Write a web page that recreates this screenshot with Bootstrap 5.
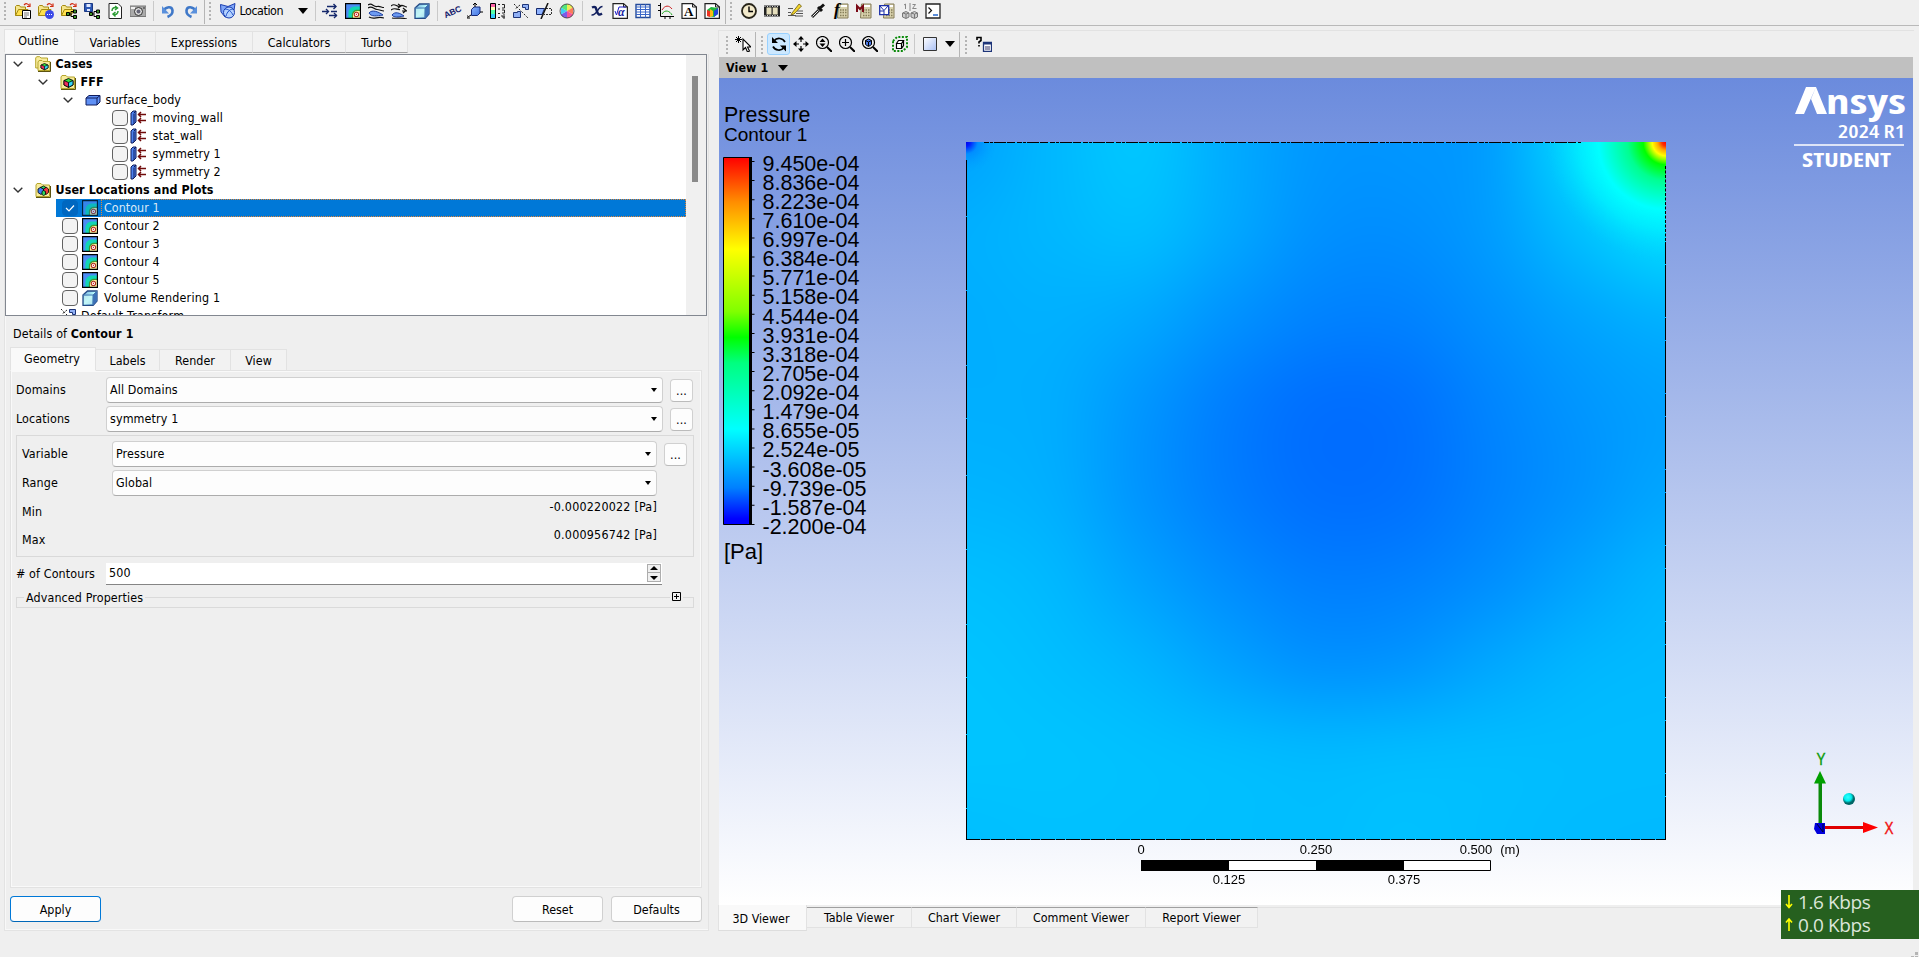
<!DOCTYPE html>
<html lang="en">
<head>
<meta charset="utf-8">
<title>CFD-Post</title>
<link rel="stylesheet" href="https://cdn.jsdelivr.net/npm/bootstrap@5.3.0/dist/css/bootstrap.min.css">
<style>
body{width:1919px;height:957px;overflow:hidden;background:#efefef;color:#000;font:12.4px/18px "DejaVu Sans Condensed","DejaVu Sans",sans-serif;font-stretch:condensed;white-space:nowrap}
b{font-weight:700;letter-spacing:.1px}
.topbar{height:26px;border-bottom:1px solid #b9b9b9;padding-bottom:3px}
.topbar .grip{height:22px}
.ic{width:23px;flex:none;display:flex;align-items:center;justify-content:center}
.ic svg,.ti{width:16px;height:16px;flex:none;overflow:visible}
.grip{width:11.5px;flex:none;background:radial-gradient(circle,#b4b4b4 1.1px,transparent 1.4px) 3px 1px/4px 4px repeat-y}
.vsep{width:7px;flex:none;height:20px;background:linear-gradient(#c9c9c9,#c9c9c9) 3px 0/1px 100% no-repeat}
.edge{width:1.5px;flex:none;height:25px;border-left:1px solid #b5b5b5;margin-left:1px}
.loc{width:95px;font-size:12.4px;letter-spacing:-.45px}
.down{width:0;height:0;border:5px solid transparent;border-top:6px solid #000;border-bottom:0;flex:none}
.down.s{border-width:4px 3.5px 0}
.leftpane{width:705px;height:878px;margin:0 0 0 4px;flex:none;padding-top:3px}
.tabrow{height:24px;align-items:flex-end}
.tabrow>div{height:22px;background:#f2f2f2;border:1px solid #e2e2e2;border-left-width:0;text-align:center;flex:none;line-height:21px;font-size:12.4px}
.tabrow>div.on{height:24px;background:#f9f9f9;border-bottom-color:#f9f9f9;border-left-width:1px;padding-right:2px}
.outl>div:not(.on){border-bottom-color:#a0a0a0}
.outer{border:1px solid #e3e3e3;border-top:0;height:877px;box-shadow:inset 1px -1px #f8f8f8}
.tree{width:702px;height:262px;border:1px solid #828790;background:#fff;overflow:hidden;margin-top:1px;letter-spacing:.1px}
.tree .rw{height:18px;display:flex;align-items:center}
.tree .rw>svg{flex:none}
.chev{width:10px;height:6px}
.fi{margin:0 5px 0 11.5px}
.cb{width:16px;height:16px;border:1px solid #626262;border-radius:4px;background:#f3f3f3;flex:none}
.cb.ck{background:#0067c0;border-color:#0067c0}
.i3{padding-left:106px}
.i3 .ti{margin:0 6.5px 0 2px}
.sel{background:linear-gradient(#0078d7,#0078d7) 50px 0 no-repeat;color:#dbe9f6}
.sel .lab{outline:1px dotted #e0863a;outline-offset:-1px;height:18px;line-height:18px;flex:1;padding-left:3px}
.i2{padding-left:56px;letter-spacing:.05px}
.i2 .ti{margin:0 6px 0 4px}
.sbar{width:20px;background:#f0f0f0;padding:21px 0 0 6px;flex:none}
.sbar div{width:6px;height:106px;background:#8a8a8a}
.details{padding:0 6px 0 5px;letter-spacing:.12px}
.details .tabrow{letter-spacing:.05px}
.pane{border:1px solid #e2e2e2;width:692px;height:518px;box-shadow:inset 1px -1px #f9f9f9,inset -1px 1px #f9f9f9;padding:6px 6px 0 5px;margin-top:-1px}
.frow{display:flex;align-items:center;height:26px;margin-bottom:3px}
.frow>.fl{width:90px;flex:none}
.combo{height:26px;background:#fdfdfd;border:1px solid #d0d0d0;border-bottom-color:#acacac;border-radius:4px;display:flex;align-items:center;justify-content:space-between;padding:0 5px 0 3px;flex:none}
.dots{width:23px;height:23px;background:#fdfdfd;border:1px solid #d0d0d0;border-bottom-color:#bbb;border-radius:4px;margin-left:7px;text-align:center;line-height:22px;flex:none}
.grp{border:1px solid #d9d9d9;height:122px;width:678px;padding:5px 0 0 5px}
.pb{background:#fdfdfd;border:1px solid #d0d0d0;border-bottom-color:#bbb;border-radius:4px;width:91px;height:26px;text-align:center;line-height:25px;padding:0;font-size:12.4px;color:#000}
.pb.def{border-color:#0078d7;border-bottom-color:#0067b8}
.vals{width:635px;padding-top:4px}
.vals span+span{margin-top:-5px;letter-spacing:.22px}
.spin{width:556px;height:22px;background:#fff;border-bottom:1px solid #858585;display:flex;justify-content:space-between;padding:1px 1px 1px 3px}
.spin .ar{width:14px;height:18px;border:1px solid #adadad;background:#f0f0f0}
.adv{width:678px;height:11px;border:1px solid #dadada;position:relative}
.adv span,.adv svg{position:absolute;background:#efefef}
.viewbar{height:27px;border:1px solid #e2e2e2;border-width:1px 0 0 1px}
.viewbar .grip{height:20px}
.ic.hot{background:#cce8ff;border:1px solid #99d1ff;border-radius:3px;height:22px;margin:0 -1px}
.vname{height:21px;background:#c0c0c0;padding:0 0 0 7px;font-weight:700;letter-spacing:.1px}
.right{width:1196px;margin:4px 0 0 9px;flex:none}
.stage{position:relative;width:1194px;height:827px;margin-left:1px;background:linear-gradient(#6b8bdd,#fff);font-family:"Liberation Sans",Arial,sans-serif}
.stage>*{position:absolute}
.stage svg{overflow:visible}
.legend{left:5px;top:24px}
.legend .t1{font-size:21.4px;line-height:26px;letter-spacing:.1px}
.legend .t2{font-size:19px;line-height:14px;height:26.5px}
.legend ul{font-size:21.5px;line-height:19.12px;margin:0 0 0 38.5px;padding:0;list-style:none}
.legend .t3{font-size:22px;line-height:30px}
.cbar{left:4px;top:79px;width:31px;height:369px}
.plot{left:247px;top:64px;width:700px;height:698px}
.scale{left:390px;top:762px;width:420px;height:50px}
.brand{left:1070px;top:4px;width:124px;height:90px}
.triad{left:1090px;top:670px;width:100px;height:100px}
.vt{margin-left:0;align-items:flex-start}
.vt>div{height:21px;background:#f2f2f2;border:1px solid #e2e2e2;border-left-width:0;text-align:center;margin-top:2px;line-height:20px;border-top-color:#a0a0a0}
.vt>div.on{height:26px;margin-top:0;background:#f9f9f9;border-top:0;border-left-width:1px;line-height:28px;border-bottom-color:#ddd;padding-right:3px}
.vt>div.rest{flex:1;height:1px;background:#e2e2e2;border:0}
.net{position:absolute;left:1781px;top:890px;width:138px;height:49px;background:#26601f;color:#dce6da;font:19px/22.5px "Open Sans","Noto Sans",sans-serif;padding:1px 0 0 4px;letter-spacing:-.4px}
.net div{display:flex;align-items:center;gap:5px}
</style>
<script src="https://cdn.jsdelivr.net/npm/bootstrap@5.3.0/dist/js/bootstrap.bundle.min.js"></script>
</head>
<body>
<svg width="0" height="0" class="position-absolute">
<defs>
<linearGradient id="gb" x2="1" y2="1"><stop stop-color="#8ab4ff"/><stop offset="1" stop-color="#3e74e0"/></linearGradient>
<linearGradient id="gc" x2="1" y2="1"><stop stop-color="#fff"/><stop offset="1" stop-color="#a9c0f5"/></linearGradient>
<linearGradient id="gv" x2="1" y2="1"><stop stop-color="#6ba3d9"/><stop offset=".5" stop-color="#bff"/><stop offset="1" stop-color="#3b78c4"/></linearGradient>
<symbol id="fold" viewBox="0 0 16 16"><path d="M.5 12.500V3.500l1-1h3l1 1.500h5v2" fill="#f5e58b" stroke="#a58a10"/><path d="M.5 12.500 3.500 6.500H13l-3 6z" fill="#ffe14e" stroke="#a58a10"/><path d="M9 2c2-2 4-1.500 5 .5M15 .5v3h-3" fill="none" stroke="#d22a10" stroke-width="1.200"/></symbol>
<symbol id="net3" viewBox="0 0 16 16"><path d="M8 11h2M10 8.500v5M10 8.500h2M10 13.500h2" stroke="#000" fill="none"/><path d="M5.500 9.500h3v3h-3zM12.500 7h3v3h-3zM12.500 12.500h3v3h-3z" fill="#3c9a28" stroke="#000"/></symbol>
<symbol id="opn" viewBox="0 0 16 16"><use href="#fold"/><path d="M7.500 7.500h8v8h-8z" fill="#fff" stroke="#000"/><path d="M9 10h5M9 12h5M9 14h3" stroke="#777"/></symbol>
<symbol id="opc" viewBox="0 0 16 16"><use href="#fold"/><circle cx="11.500" cy="11.500" r="4.500" fill="#3a49e8"/><path d="M9 11.500h1M11 11.500h1M13 11.500h1" stroke="#fff"/></symbol>
<symbol id="ops" viewBox="0 0 16 16"><use href="#fold"/><use href="#net3"/></symbol>
<symbol id="sav" viewBox="0 0 16 16"><path d="M.5.5h8v8h-8z" fill="#2b57b5" stroke="#1c3a84"/><path d="M2.500 1h4v3h-4zM3 6h3v2H3z" fill="#dfe8ff"/><use href="#net3"/></symbol>
<symbol id="ref" viewBox="0 0 16 16"><path d="M2 .5h9L14.500 4v11.500H2z" fill="#fff" stroke="#222"/><path d="M5 8c0-3 2-4 5-3M8 3l2.500 2L8 7M11 8c0 3-2 4-5 3M8.500 9 6 11l2.500 2.500" fill="none" stroke="#2c9c34" stroke-width="1.500"/></symbol>
<symbol id="cam" viewBox="0 0 16 16"><path d="M0 3h16v10.500H0z" fill="#aaa" stroke="#777"/><path d="M1 4h4v2H1z" fill="#eee"/><circle cx="8.500" cy="8.500" r="4" fill="#ddd" stroke="#333"/><circle cx="8.500" cy="8.500" r="2" fill="#667"/><path d="M13 5h2" stroke="#333"/></symbol>
<symbol id="undo" viewBox="0 0 16 16"><path d="M3 8.500C6 3 12 3 12.500 7.500c.3 3-1.500 5-5 6.500" fill="none" stroke="#3f78c8" stroke-width="2.600"/><path d="M2 3v7.500h7z" fill="#5a90dc"/></symbol>
<symbol id="loc" viewBox="0 0 16 16"><path d="M.5 1.500 8 3.500l7-3-1 7L12 14H5L1 9z" fill="#7fa6f8" stroke="#1c3fb0"/><circle cx="9" cy="9.500" r="5.500" fill="#b5d2ff" stroke="#1c3fb0"/><path d="M5 6c3 0 6 2 8 6M13 6c-3 0-6 3-7 7" fill="none" stroke="#1c4fc8"/></symbol>
<symbol id="vec" viewBox="0 0 16 16"><path d="M0 8.500h6M5 3.500h9M9 8.500h6M7 12.500h8" stroke="#15286b" stroke-width="1.400"/><path d="m4 6 2.500 2.500L4 11M11.500 1 14 3.500 11.500 6M12 10l2.500 2.500L12 15" fill="none" stroke="#15286b" stroke-width="1.400"/></symbol>
<symbol id="cont" viewBox="0 0 14 14"><path d="M.5.500h13v13H.500z" fill="#4c8cf4"/><path d="M3 13.500V9c0-4 2.500-6 6-6h4.500v10.500z" fill="#12d6b4"/><path d="M6 13.500V10.500c0-2.500 2-4.500 4.500-4.500h3v7.500z" fill="#3f9a30"/><path d="M7 13.500V11c0-2.500 1.500-4 4-4h2.500v6.500z" fill="#fff3a0"/><circle cx="10" cy="10" r="1.900" fill="#fff" stroke="#b03020" stroke-width=".9"/><path d="M9.500 9.500h1v1h-1z" fill="#e22"/><path d="M.5.500h13v13H.500z" fill="none" stroke="#000"/></symbol>
<symbol id="strm" viewBox="0 0 16 16"><path d="M0 2c4-3 5 2 9 1.500s4 1 7 1M0 5c4-3 6 1.500 9 1.500s4 1.500 7 1.500M1 14c5 3 8-1 15 1" fill="none" stroke="#111" stroke-width="1.200"/><path d="M1 10c3-4 10-1 14 2-6 1-12 2-14-2z" fill="#6d9bf2" stroke="#1c3fa0"/></symbol>
<symbol id="strm2" viewBox="0 0 16 16"><path d="M0 3c4-4 6 2 9 0s4 1 7 1M0 7c4-3 6 0 9-.5M11 8h5M1 15c5 1 8-1 15 1M7 1l3 2-3 2M12 5l3 2.500L12 10" fill="none" stroke="#111" stroke-width="1.200"/><path d="M1 12c3-4 8-2 12 1-6 1-10 2-12-1z" fill="#6d9bf2" stroke="#1c3fa0"/></symbol>
<symbol id="vol" viewBox="0 0 16 16"><path d="M1 5 5.500 1H15v10l-4 4.500H1z" fill="url(#gv)" stroke="#234a86" stroke-width="1.300"/><path d="M11 5 15 1v10l-4 4.500z" fill="#3c71b8"/><path d="M1 5h10v10M11 5l4-4" fill="none" stroke="#4778b0"/><path d="M2 6h8v8H2z" fill="#c6f3f4" opacity=".75"/></symbol>
<symbol id="axis" viewBox="0 0 16 16"><path d="M4.500 6.500 7 4h6v6l-2.500 2.500h-6z" fill="url(#gb)" stroke="#14287a"/><path d="M8 4V1M6 2l2-2 2 2M13 9h3M4 12l-3 2M0 12v3h3" fill="none" stroke="#000"/></symbol>
<symbol id="leg" viewBox="0 0 16 16"><path d="M.5.500h5v15h-5z" fill="#fff" stroke="#000"/><path d="M1 1h4v3H1z" fill="#f6a"/><path d="M1 4h4v3H1z" fill="#ffb"/><path d="M1 7h4v4H1z" fill="#5fa"/><path d="M1 11h4v4H1z" fill="#3cf"/><path d="M8 1.500h2M8 6h2M8 10.500h2M8 14.500h2M12 1.500h2.500V5H12M12 7h2.500v3H12M12 12l0 2h3M14 11v5" fill="none" stroke="#222"/></symbol>
<symbol id="xfm" viewBox="0 0 16 16"><path d="M9.500 1.500h6v5h-3v-2h-3zM.5 9.500h4v-1h3v6h-7z" fill="#90b0f5" stroke="#1d3478"/><path d="m1 1 14 14M7 2 2 6" stroke="#222" stroke-dasharray="2 1.500"/></symbol>
<symbol id="clip" viewBox="0 0 16 16"><path d="M.5 5.500h8L6 11.500H.5z" fill="#8db2ff" stroke="#15286b"/><path d="M10 5.500h5.500v6H8" fill="none" stroke="#333" stroke-dasharray="2 1"/><path d="M12 0 5 16" stroke="#111" stroke-width="1.500"/></symbol>
<symbol id="whl" viewBox="0 0 16 16"><path d="M8 8V1a7 7 0 0 1 6 3.500z" fill="#ee5"/><path d="m8 8 6-3.500v7z" fill="#fa7c5a"/><path d="m8 8 6 3.500A7 7 0 0 1 8 15z" fill="#f5539b"/><path d="M8 8v7a7 7 0 0 1-6-3.500z" fill="#7b5ce8"/><path d="m8 8-6 3.500v-7z" fill="#3ecdf5"/><path d="M8 8 2 4.500A7 7 0 0 1 8 1z" fill="#57e47a"/><circle cx="8" cy="8" r="7" fill="none" stroke="#333" stroke-width=".8"/></symbol>
<symbol id="page" viewBox="0 0 16 16"><path d="M1 .6h10.500L15.400 4v11.400H1z" fill="#fff" stroke="#222" stroke-width="1.200"/><path d="M11.500.6V4h4" fill="none" stroke="#222"/></symbol>
<symbol id="tbl" viewBox="0 0 16 16"><path d="M1 1.500h14v13H1z" fill="#fff" stroke="#234a9a" stroke-width="1.400"/><path d="M1 4h14M1 6.500h14M1 9h14M1 11.500h14M5.500 1.500v13M10.500 1.500v13" stroke="#3a66c8"/></symbol>
<symbol id="chrt" viewBox="0 0 16 16"><path d="M2.500 0v13.500H16M0 2.500h2.500M0 7.500h2.500M7 13v3M12 13v3" fill="none" stroke="#000"/><path d="M4 7c3-5 7-5 10-1" fill="none" stroke="#c22"/><path d="M4 11c3-5 8-3 10 1" fill="none" stroke="#2a2"/></symbol>
<symbol id="fig" viewBox="0 0 16 16"><use href="#page"/><path d="m3 7 4-3 7 1v6l-4 3-7-1z" fill="#1fb83c"/><path d="m3 7 3 1v6l-3-1z" fill="#e32"/><path d="m6 6 3 2v5l-3 1z" fill="#fb1"/><path d="m10 8 4-3v6l-4 3z" fill="#24d"/></symbol>
<symbol id="clk" viewBox="0 0 16 16"><circle cx="8" cy="8" r="7" fill="#f3eacb" stroke="#28251a" stroke-width="1.800"/><path d="M8 3.500V8.500h4" fill="none" stroke="#000" stroke-width="1.400"/></symbol>
<symbol id="film" viewBox="0 0 16 16"><path d="M0 2.500h16v11H0z" fill="#222"/><path d="M2.500 4.500h5v7h-5zM8.700 4.500h5v7h-5z" fill="#e6dfbd"/><path d="M.5 3.500h15M.5 12.500h15" stroke="#ddd" stroke-dasharray="1 1.500"/></symbol>
<symbol id="edit" viewBox="0 0 16 16"><path d="M1 5.500h5M1 12.500h8M10 8h6M9 10.500h7M8 13h8M1 9.500h3" stroke="#555"/><path d="m5 10 7-9 2.500 2L7 11l-3 1z" fill="#f4d62c" stroke="#6b5a10" stroke-width=".8"/></symbol>
<symbol id="drop" viewBox="0 0 16 16"><path d="m2 14 7-7" stroke="#222" stroke-width="3"/><path d="m2.500 13.500 6-6" stroke="#eee"/><path d="m8 4 4 4M9.500 5.500 14 1.500" stroke="#111" stroke-width="3"/></symbol>
<symbol id="calc" viewBox="0 0 16 16"><path d="M5.500 1h9.500v14H4.500z" fill="#d9d2ad" stroke="#857d58"/><path d="M8 3h6" stroke="#fff" stroke-width="2"/><path d="M7 7h7M7 9.500h7M7 12.500h7" stroke="#857d58" stroke-width="1.500" stroke-dasharray="1.500 1"/></symbol>
<symbol id="m2" viewBox="0 0 16 16"><use href="#calc"/><path d="M1 9V3l3 3 3-3v6" fill="none" stroke="#7a0a16" stroke-width="2"/></symbol>
<symbol id="m3" viewBox="0 0 16 16"><use href="#calc"/><path d="M.7 2.700h9v9h-9z" fill="#fff" stroke="#1b2fa8" stroke-width="1.300"/><path d="m1 3 4 4.500L9 3M5 7.500V12M1 8h4" stroke="#1b2fa8" fill="none"/></symbol>
<symbol id="cmp" viewBox="0 0 16 16"><path d="M.5 10 4 8.500 7 10v4l-3 1.500L.5 14zM9 10l3.500-1.500L15.500 10v4l-3 1.500L9 14zM4 11v4M12.500 11v4M1 10l3 1 3-1M9 10l3.500 1 3-1" fill="#ccc" stroke="#777"/><path d="M2 2l1.500-1v5M8 0v8M10.500 1.500h3l-3 4h4" fill="none" stroke="#888"/></symbol>
<symbol id="term" viewBox="0 0 16 16"><path d="M1 1h14v14H1z" fill="#fff" stroke="#222" stroke-width="1.300"/><path d="m3.500 4.500 3 3-3 3" fill="none" stroke="#111" stroke-width="1.200"/><path d="M8 12h5" stroke="#26c" stroke-width="1.500"/></symbol>
<symbol id="pick" viewBox="0 0 16 16"><path d="M3.500 0v7M0 3.500h7M1 1l5 5M6 1 1 6" stroke="#000"/><path d="M8 3v11l2.500-2.500L12.500 16l2-1-2-4H16z" fill="#fff" stroke="#000" stroke-width="1.100"/></symbol>
<symbol id="rot" viewBox="0 0 16 16"><path d="M3 5c3-4 9-3 11 1M13 11.500c-3 4-9 3-11-1" fill="none" stroke="#000" stroke-width="1.700"/><path d="M1 1v6h6zM15 15.500v-6H9z"/></symbol>
<symbol id="pan" viewBox="0 0 16 16"><path d="M8 1v5M8 10v5M1 8h5M10 8h5" stroke="#000" stroke-width="1.200"/><path d="M8 0l3 3.500H5zM8 16l3-3.500H5zM0 8l3.500-3v6zM16 8l-3.500-3v6z"/></symbol>
<symbol id="mag" viewBox="0 0 16 16"><circle cx="6.500" cy="6.500" r="6" fill="none" stroke="#000" stroke-width="1.200"/><path d="m11 11 5 5" stroke="#000" stroke-width="2"/></symbol>
<symbol id="z1" viewBox="0 0 16 16"><use href="#mag"/><path d="M6.500 2.500 9.500 6h-6zM6.500 11l3-3.500h-6z"/></symbol>
<symbol id="z2" viewBox="0 0 16 16"><use href="#mag"/><path d="M6.500 3v7M3 6.500h7" stroke="#000" stroke-width="1.200"/></symbol>
<symbol id="z3" viewBox="0 0 16 16"><use href="#mag"/><path d="m3.500 4.500 3-1.500 3 1.500V8.500l-3 2-3-2z" fill="#4c7cf0" stroke="#000"/><path d="M3.500 4.500 6.500 6l3-1.500M6.500 6v4" fill="none" stroke="#000"/></symbol>
<symbol id="fit" viewBox="0 0 16 16"><path d="M1 5 5 1h10v10l-4 4H1z" fill="none" stroke="#0a8a0a" stroke-width="2" stroke-dasharray="2 1.500"/><path d="M4.500 7.500h5v5h-5zM4.500 7.500l2-3h5l-2 3M11.500 4.500v5l-2 3" fill="#fff" stroke="#000" stroke-width="1.200"/></symbol>
<symbol id="help" viewBox="0 0 16 16"><path d="M1 4V1.500h4v3L3 6v1.500M3 9v1.500" fill="none" stroke="#000" stroke-width="1.600"/><path d="M7.500 6.500h8v9h-8z" fill="#fff" stroke="#1d3478" stroke-width="1.300"/><path d="M7.500 7.500h8" stroke="#1d3478" stroke-width="2"/><path d="M9 11h5M9 13h5" stroke="#336"/></symbol>
<symbol id="chev" viewBox="0 0 10 6"><path d="m.7.7 4.300 4.300L9.300.7" fill="none" stroke="#333" stroke-width="1.400"/></symbol>
<symbol id="cube" viewBox="0 0 16 16"><path d="M1 14.500V3l1-1.500h4L7.500 3H14.500v11.500z" fill="#f8ec9c" stroke="#b5a52c"/><path d="M1 15.500h14.500V4" fill="none" stroke="#5d5310"/><path d="m4 6.500 4.500-2 4.500 2v4.500l-4.500 2.300L4 11z" fill="#2fe040" stroke="#000" stroke-width=".9"/><path d="m4 6.500 4.500 2v4.800L4 11z" fill="#f02a60" stroke="#000" stroke-width=".8"/><path d="M13 6.500 8.500 8.500v4.800L13 11z" fill="#35d5f8" stroke="#000" stroke-width=".8"/></symbol>
<symbol id="cube2" viewBox="0 0 16 16"><path d="M.7 12V2l1-1.300h3L6 2h6.500v10z" fill="#f8ec9c" stroke="#b5a52c"/><path d="M3 14.500V6l1-1.500h3L8 5.500h7v9z" fill="#f8ec9c" stroke="#b5a52c"/><path d="M3 15.500h12.500V6" fill="none" stroke="#5d5310"/><path d="m6 9 3.500-1.500L13 9v3l-3.500 1.700L6 12z" fill="#2fe040" stroke="#000" stroke-width=".8"/><path d="m6 9 3.500 1.300v3.400L6 12z" fill="#f02a60" stroke="#000" stroke-width=".6"/><path d="M13 9 9.500 10.300v3.400L13 12z" fill="#35d5f8" stroke="#000" stroke-width=".6"/></symbol>
<symbol id="cube3" viewBox="0 0 16 16"><path d="M1 14.500V3l1-1.500h4L7.500 3H14.500v11.500z" fill="#f8ec9c" stroke="#b5a52c"/><path d="M1 15.500h14.500V4" fill="none" stroke="#5d5310"/><path d="M3 7l3-2 2.500 1.500v4L6 12.500 3 10.500z" fill="#3f7cf5" stroke="#000" stroke-width=".8"/><path d="M8.500 7l2.500-2 2.500 2v3.500L11 12.500l-2.500-2z" fill="#f03a40" stroke="#000" stroke-width=".8"/><path d="m5.500 5.500 3-1.500 2.500 1.500-2.500 1.500zM7 9.500l1.500-1 2 1v3l-2 1-1.500-1z" fill="#2fd860" stroke="#000" stroke-width=".8"/></symbol>
<symbol id="box" viewBox="0 0 16 16"><path d="M1 6 4 3.500h11V10l-3 3H1z" fill="#5f90f5" stroke="#101c5c"/><path d="M1 6h11v7M12 6l3-2.500" fill="none" stroke="#101c5c"/></symbol>
<symbol id="bnd" viewBox="0 0 16 16"><path d="M1 3 3 1h3v11l-3 3H1z" fill="#4e82ee" stroke="#101c5c"/><path d="M4 3.500V14M4 3l2-2" stroke="#101c5c"/><path d="M8 4.500h8M8 10.500h8M11 2 8.500 4.500 11 7M11 8l-2.500 2.500L11 13" fill="none" stroke="#700a0a" stroke-width="1.500"/></symbol>
</defs></svg>

<header class="topbar d-flex align-items-center">
<span class="grip"></span>
<span class="ic"><svg><use href="#opn"/></svg></span><span class="ic"><svg><use href="#opc"/></svg></span><span class="ic"><svg><use href="#ops"/></svg></span><span class="ic"><svg><use href="#sav"/></svg></span><span class="ic"><svg><use href="#ref"/></svg></span><span class="ic"><svg><use href="#cam"/></svg></span>
<span class="vsep"></span>
<span class="ic"><svg viewBox="0 0 16 16"><use href="#undo"/></svg></span><span class="ic"><svg viewBox="0 0 16 16"><use href="#undo" transform="matrix(-1 0 0 1 16 0)" width="16" height="16"/></svg></span>
<span class="edge"></span><span class="grip"></span>
<span class="loc d-flex align-items-center"><span class="ic"><svg><use href="#loc"/></svg></span><span class="flex-fill">Location</span><i class="down me-1"></i></span>
<span class="vsep"></span>
<span class="ic"><svg><use href="#vec"/></svg></span><span class="ic"><svg><use href="#cont"/></svg></span><span class="ic"><svg><use href="#strm"/></svg></span><span class="ic"><svg><use href="#strm2"/></svg></span><span class="ic"><svg><use href="#vol"/></svg></span>
<span class="vsep"></span>
<span class="ic"><svg viewBox="0 0 16 16"><text x="-1" y="12" font-family="Liberation Sans" font-weight="700" font-size="8.500" letter-spacing="0" fill="#15206b" transform="rotate(-24 8 8)">ABC</text></svg></span><span class="ic"><svg><use href="#axis"/></svg></span><span class="ic"><svg><use href="#leg"/></svg></span><span class="ic"><svg><use href="#xfm"/></svg></span><span class="ic"><svg><use href="#clip"/></svg></span><span class="ic"><svg><use href="#whl"/></svg></span>
<span class="vsep"></span>
<span class="ic"><svg viewBox="0 0 16 16"><path d="M3 4.500c4-2 4 1 5 4s2 4 5 2" fill="none" stroke="#12205f" stroke-width="2.400"/><path d="M13.500 3.500c-5 0-5 9-11 8.500" fill="none" stroke="#12205f" stroke-width="1.500"/></svg></span><span class="ic"><svg viewBox="0 0 16 16"><use href="#page"/><path d="m3 8 1.500 4L7 4h7" fill="none" stroke="#22c"/><text x="6" y="12.500" font-family="Liberation Serif" font-style="italic" font-weight="700" font-size="12" fill="#12209f">α</text></svg></span><span class="ic"><svg><use href="#tbl"/></svg></span><span class="ic"><svg><use href="#chrt"/></svg></span><span class="ic"><svg viewBox="0 0 16 16"><use href="#page"/><text x="3" y="13" font-family="Liberation Serif" font-weight="700" font-size="13">A</text></svg></span><span class="ic"><svg><use href="#fig"/></svg></span>
<span class="edge"></span><span class="grip"></span>
<span class="ic"><svg><use href="#clk"/></svg></span><span class="ic"><svg><use href="#film"/></svg></span><span class="ic"><svg><use href="#edit"/></svg></span><span class="ic"><svg><use href="#drop"/></svg></span><span class="ic"><svg viewBox="0 0 16 16"><use href="#calc"/><text x="1" y="12" font-family="Liberation Serif" font-style="italic" font-weight="700" font-size="17">f</text></svg></span><span class="ic"><svg><use href="#m2"/></svg></span><span class="ic"><svg><use href="#m3"/></svg></span><span class="ic"><svg><use href="#cmp"/></svg></span><span class="ic"><svg><use href="#term"/></svg></span>
</header>

<main class="d-flex">
<section class="leftpane">
<div class="tabrow outl d-flex"><div class="on" style="width:71px">Outline</div><div style="width:81px">Variables</div><div style="width:97px">Expressions</div><div style="width:93px">Calculators</div><div style="width:62px">Turbo</div></div>
<div class="outer">
<div class="tree d-flex"><div class="flex-fill">
<div class="rw" style="padding-left:7px"><svg class="chev"><use href="#chev"/></svg><svg class="ti fi"><use href="#cube2"/></svg><b>Cases</b></div>
<div class="rw" style="padding-left:32px"><svg class="chev"><use href="#chev"/></svg><svg class="ti fi"><use href="#cube"/></svg><b>FFF</b></div>
<div class="rw" style="padding-left:57px"><svg class="chev"><use href="#chev"/></svg><svg class="ti fi"><use href="#box"/></svg>surface_body</div>
<div class="rw i3"><i class="cb"></i><svg class="ti"><use href="#bnd"/></svg><span>moving_wall</span></div>
<div class="rw i3"><i class="cb"></i><svg class="ti"><use href="#bnd"/></svg><span>stat_wall</span></div>
<div class="rw i3"><i class="cb"></i><svg class="ti"><use href="#bnd"/></svg><span>symmetry 1</span></div>
<div class="rw i3"><i class="cb"></i><svg class="ti"><use href="#bnd"/></svg><span>symmetry 2</span></div>
<div class="rw" style="padding-left:7px"><svg class="chev"><use href="#chev"/></svg><svg class="ti fi"><use href="#cube3"/></svg><b>User Locations and Plots</b></div>
<div class="rw i2 sel"><i class="cb ck d-flex"><svg viewBox="0 0 14 14"><path d="m3 7 3 3 5-5.500" fill="none" stroke="#fff" stroke-width="1.200"/></svg></i><svg class="ti" style="margin-right:3px;opacity:.7"><use href="#cont"/></svg><span class="lab">Contour 1</span></div>
<div class="rw i2"><i class="cb"></i><svg class="ti"><use href="#cont"/></svg><span>Contour 2</span></div>
<div class="rw i2"><i class="cb"></i><svg class="ti"><use href="#cont"/></svg><span>Contour 3</span></div>
<div class="rw i2"><i class="cb"></i><svg class="ti"><use href="#cont"/></svg><span>Contour 4</span></div>
<div class="rw i2"><i class="cb"></i><svg class="ti"><use href="#cont"/></svg><span>Contour 5</span></div>
<div class="rw i2" style="letter-spacing:.22px"><i class="cb"></i><svg class="ti"><use href="#vol"/></svg><span>Volume Rendering 1</span></div>
<div class="rw" style="padding-left:54px;letter-spacing:.22px"><svg class="ti" style="margin-right:5px"><use href="#xfm"/></svg>Default Transform</div>
</div><div class="sbar"><div></div></div></div>
<div class="details">
<div style="height:31px;padding:9px 0 0 3px">Details of <b>Contour 1</b></div>
<div class="tabrow d-flex"><div class="on" style="width:86px">Geometry</div><div style="width:64px">Labels</div><div style="width:71px">Render</div><div style="width:56px">View</div></div>
<div class="pane">
<div class="frow"><span class="fl">Domains</span><div class="combo" style="width:557px">All Domains<i class="down s"></i></div><div class="dots">...</div></div>
<div class="frow"><span class="fl">Locations</span><div class="combo" style="width:557px">symmetry 1<i class="down s"></i></div><div class="dots">...</div></div>
<div class="grp">
<div class="frow"><span class="fl">Variable</span><div class="combo" style="width:545px">Pressure<i class="down s"></i></div><div class="dots">...</div></div>
<div class="frow"><span class="fl">Range</span><div class="combo" style="width:545px">Global<i class="down s"></i></div></div>
<div class="vals d-flex justify-content-between" style="height:28px"><span>Min</span><span>-0.000220022 [Pa]</span></div>
<div class="vals d-flex justify-content-between"><span>Max</span><span>0.000956742 [Pa]</span></div>
</div>
<div class="d-flex align-items-center" style="margin-top:6px"><span style="width:90px">#&nbsp;of&nbsp;Contours</span><div class="spin"><span>500</span><div class="ar d-flex flex-column align-items-center justify-content-around"><svg width="8" height="4"><path d="M4 0l4 4H0z"/></svg><svg width="12" height="1"><path d="M0 0h12v1H0z" fill="#aaa"/></svg><svg width="8" height="4"><path d="M0 0h8L4 4z"/></svg></div></div></div>
<div class="adv" style="margin-top:12px"><span style="left:7px;top:-9px;padding:0 2px">Advanced Properties</span><svg style="left:653px;top:-6px" width="13" height="10"><path d="M2.500.5h8v8h-8zM4 4.500h5M6.500 2v5" fill="none" stroke="#000"/></svg></div>
</div>
<div class="d-flex" style="margin-top:8px;gap:8px"><button class="pb def me-auto">Apply</button><button class="pb">Reset</button><button class="pb">Defaults</button></div>
</div></div>
</section>

<section class="right">
<div class="viewbar d-flex align-items-center">
<span style="width:3px"></span><span class="grip" style="width:9px"></span><span class="ic"><svg><use href="#pick"/></svg></span><span class="edge"></span><span class="grip"></span>
<span class="ic hot"><svg><use href="#rot"/></svg></span><span class="ic"><svg><use href="#pan"/></svg></span><span class="ic"><svg><use href="#z1"/></svg></span><span class="ic"><svg><use href="#z2"/></svg></span><span class="ic"><svg><use href="#z3"/></svg></span><span class="vsep"></span><span class="ic"><svg><use href="#fit"/></svg></span><span class="vsep"></span>
<span class="ic"><svg viewBox="0 0 16 16"><path d="M1.500 1.500h13v13h-13z" fill="url(#gc)" stroke="#333"/></svg></span><i class="down ms-1"></i><span class="edge" style="margin-left:4px"></span><span class="grip"></span><span class="ic"><svg><use href="#help"/></svg></span>
</div>
<div style="padding-left:1px;width:1195px"><div class="vname d-flex align-items-center"><span>View 1</span><i class="down" style="margin-left:10px"></i></div></div>
<div class="stage">
<div class="legend"><div class="t1">Pressure</div><div class="t2">Contour 1</div>
<ul><li>9.450e-04</li><li>8.836e-04</li><li>8.223e-04</li><li>7.610e-04</li><li>6.997e-04</li><li>6.384e-04</li><li>5.771e-04</li><li>5.158e-04</li><li>4.544e-04</li><li>3.931e-04</li><li>3.318e-04</li><li>2.705e-04</li><li>2.092e-04</li><li>1.479e-04</li><li>8.655e-05</li><li>2.524e-05</li><li>-3.608e-05</li><li>-9.739e-05</li><li>-1.587e-04</li><li>-2.200e-04</li></ul>
<div class="t3">[Pa]</div></div>
<svg class="cbar" viewBox="0 0 31 369"><defs><linearGradient id="rain" x2="0" y2="1"><stop stop-color="red"/><stop offset=".12" stop-color="#ff8c00"/><stop offset=".25" stop-color="#ff0"/><stop offset=".42" stop-color="#80ff00"/><stop offset=".49" stop-color="#0f0"/><stop offset=".56" stop-color="#00ff80"/><stop offset=".74" stop-color="#0ff"/><stop offset=".9" stop-color="#0080ff"/><stop offset=".985" stop-color="#00f"/></linearGradient></defs><path d="M.5.500h27v367H.500z" fill="url(#rain)" stroke="#000"/><path d="M27.500 0v368" stroke="#000" stroke-width="3"/><path d="M30 4v365" stroke="#000" stroke-width="3" stroke-dasharray="1 18.100"/></svg>
<canvas class="plot" id="field" width="700" height="698"></canvas>
<svg class="plot" viewBox="0 0 700 698"><defs>
<radialGradient id="hot" gradientUnits="userSpaceOnUse" cx="700" cy="0" r="120"><stop stop-color="#f00"/><stop offset=".033" stop-color="#ff3000"/><stop offset=".07" stop-color="#fa0"/><stop offset=".115" stop-color="#ff0"/><stop offset=".19" stop-color="#0f0"/><stop offset=".32" stop-color="#00ff90"/><stop offset=".56" stop-color="#0ff"/><stop offset=".72" stop-color="#00f0ff" stop-opacity=".75"/><stop offset="1" stop-color="#00d0ff" stop-opacity="0"/></radialGradient>
<radialGradient id="cold" gradientUnits="userSpaceOnUse" cx="0" cy="0" r="30"><stop stop-color="#0000e8"/><stop offset=".15" stop-color="#0020ff"/><stop offset=".4" stop-color="#0088ff" stop-opacity=".8"/><stop offset="1" stop-color="#00a0ff" stop-opacity="0"/></radialGradient></defs>
<path d="M0 0h40v40H0z" fill="url(#cold)"/><path d="M560 0h140v140H560z" fill="url(#hot)"/>
<g fill="none" stroke="#000"><path d="M.5 18v680" stroke-dasharray="56 1 73 1 74 1 52 1"/><path d="M0 697.500h700" stroke-dasharray="14 1 9 1"/><path d="M18 .5h597" stroke-dasharray="5 1 3 1 12 1 8 2"/><path d="M699.500 24v76" stroke-dasharray="3 1.500"/><path d="M699.500 100v598" stroke-dasharray="22 1 52 1"/></g></svg>
<svg class="scale" viewBox="0 0 420 50" font-size="13" text-anchor="middle"><path d="M32.500 20.500h349v10h-349z" fill="#fff" stroke="#000"/><path d="M32 20h88v11H32zM207 20h88v11h-88z"/><text x="32" y="14">0</text><text x="207" y="14">0.250</text><text x="367" y="14">0.500</text><text x="401" y="14">(m)</text><text x="120" y="44">0.125</text><text x="295" y="44">0.375</text></svg>
<svg class="brand" viewBox="0 0 124 90" fill="#fff" font-family="Open Sans, sans-serif" font-weight="700"><path d="M6 32 17 5h10L15 32zM27 5l11 27H28L22 17z"/><text x="37" y="32" font-size="34" textLength="80" lengthAdjust="spacingAndGlyphs">nsys</text><text x="49" y="56" font-size="18.500" font-weight="600" textLength="67" lengthAdjust="spacingAndGlyphs">2024 R1</text><path d="M5 62h110v2H5z" opacity=".75"/><text x="13" y="85" font-size="19" textLength="89" lengthAdjust="spacingAndGlyphs">STUDENT</text></svg>
<svg class="triad" viewBox="0 0 100 100"><defs><radialGradient id="ball" cx=".4" cy=".35"><stop stop-color="#3ff"/><stop offset=".6" stop-color="#0ee"/><stop offset="1" stop-color="#066"/></radialGradient></defs><path d="M9.500 80V30h3.500v50z" fill="#0a8a0a"/><path d="M11 23l6 12.500H5z" fill="#00a000"/><path d="M11 78h44v3H11z" fill="#e00000"/><path d="M69 79.500 54 74v11z" fill="#f00"/><path d="M6 75h10v11H8l-3-5z" fill="#0000dc"/><circle cx="40" cy="51" r="6" fill="url(#ball)"/><path d="M8 76l6 8M14 76v8" stroke="#003"/><text x="12" y="17" text-anchor="middle" font-size="16" font-family="Liberation Sans" fill="#0a9a0a" stroke="#0a9a0a" stroke-width=".4" textLength="9" lengthAdjust="spacingAndGlyphs">Y</text><text x="80" y="85.500" text-anchor="middle" font-size="16.500" font-family="Liberation Sans" fill="#f01010" stroke="#f01010" stroke-width=".4" textLength="9" lengthAdjust="spacingAndGlyphs">X</text></svg>
</div>
<div class="tabrow vt d-flex"><div class="on" style="width:89px">3D Viewer</div><div style="width:105px">Table Viewer</div><div style="width:105px">Chart Viewer</div><div style="width:129px">Comment Viewer</div><div style="width:112px">Report Viewer</div><div class="rest"></div></div>
</section>
</main>
<div class="net"><div><svg width="8" height="14"><path d="M4 0v12M1 9l3 3.500L7 9" fill="none" stroke="#ff0" stroke-width="1.600"/></svg>1.6 Kbps</div><div><svg width="8" height="14"><path d="M4 13V1M1 4.500 4 1l3 3.500" fill="none" stroke="#ff0" stroke-width="1.600"/></svg>0.0 Kbps</div></div>
<svg class="position-absolute" width="8" height="6" style="left:1911px;top:951px"><path d="M4 1h3v3H4zM4 5h3v1H4zM0 5h3v1H0z" fill="#b5b5b5"/></svg>
<script>
// Pressure on a 9x9 grid, as the green channel of the blue-to-cyan range of the colour map
const G=[
[165,184,197,172,152,150,160,218,255],
[175,183,189,168,146,143,157,192,222],
[174,176,168,147,131,130,145,164,178],
[175,172,151,127,112,114,133,150,161],
[180,174,149,126,112,114,131,148,165],
[190,183,162,141,127,129,143,163,180],
[195,190,180,162,148,151,167,181,186],
[196,195,192,188,184,186,188,188,188],
[191,193,192,191,190,193,190,187,186]];
const at=(r,c)=>G[Math.max(0,Math.min(8,r))][Math.max(0,Math.min(8,c))];
// Uniform blend of Catmull-Rom patches
const cr=(a,b,c,d,t)=>b+.5*t*(c-a+t*(2*a-5*b+4*c-d+t*(3*(b-c)+d-a)));
const cv=document.getElementById('field'),cx=cv.getContext('2d'),im=cx.createImageData(700,698);
for(let y=0;y<698;y++){
  const v=y/697*8,r=Math.min(7,v|0),t=v-r;
  const row=[];
  for(let c=-1;c<10;c++)row.push(cr(at(r-1,c),at(r,c),at(r+1,c),at(r+2,c),t));
  for(let x=0;x<700;x++){
    const u=x/699*8,c=Math.min(7,u|0),s=u-c,k=(y*700+x)*4;
    im.data[k+1]=cr(row[c],row[c+1],row[c+2],row[c+3],s);
    im.data[k+2]=im.data[k+3]=255;
  }
}
cx.putImageData(im,0,0);
</script>
</body>
</html>
